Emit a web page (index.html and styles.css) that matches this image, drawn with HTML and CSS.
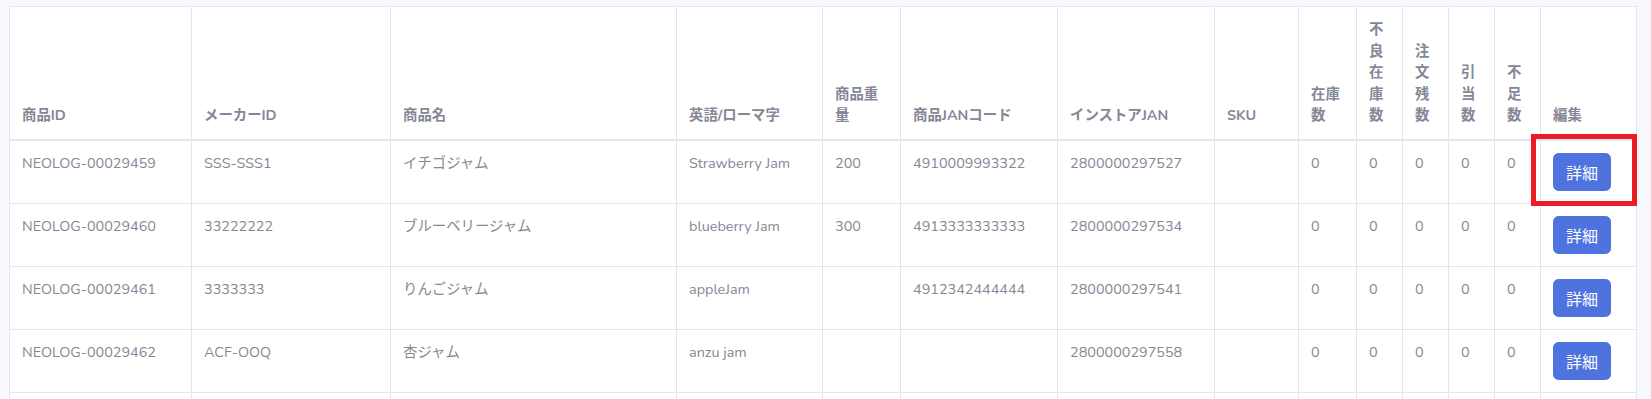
FILE: index.html
```html
<!DOCTYPE html>
<html lang="ja">
<head>
<meta charset="utf-8">
<title>商品一覧</title>
<link rel="stylesheet" href="styles.css">
</head>
<body>
<div class="wrap">
  <table class="grid">
    <colgroup>
      <col class="w1"><col class="w2"><col class="w3"><col class="w4"><col class="w5"><col class="w6"><col class="w7"><col class="w8"><col class="w9"><col class="w10"><col class="w11"><col class="w12"><col class="w13"><col class="w14">
    </colgroup>
    <thead>
      <tr>
        <th>商品ID</th>
        <th>メーカーID</th>
        <th>商品名</th>
        <th>英語/ローマ字</th>
        <th>商品重<br>量</th>
        <th>商品JANコード</th>
        <th>インストアJAN</th>
        <th>SKU</th>
        <th>在庫<br>数</th>
        <th>不<br>良<br>在<br>庫<br>数</th>
        <th>注<br>文<br>残<br>数</th>
        <th>引<br>当<br>数</th>
        <th>不<br>足<br>数</th>
        <th>編集</th>
      </tr>
    </thead>
    <tbody>
      <tr>
        <td>NEOLOG-00029459</td><td>SSS-SSS1</td><td>イチゴジャム</td><td>Strawberry Jam</td><td>200</td><td>4910009993322</td><td>2800000297527</td><td></td><td>0</td><td>0</td><td>0</td><td>0</td><td>0</td>
        <td class="edit"><button class="btn">詳細</button><span class="mark"></span></td>
      </tr>
      <tr>
        <td>NEOLOG-00029460</td><td>33222222</td><td>ブルーベリージャム</td><td>blueberry Jam</td><td>300</td><td>4913333333333</td><td>2800000297534</td><td></td><td>0</td><td>0</td><td>0</td><td>0</td><td>0</td>
        <td class="edit"><button class="btn">詳細</button></td>
      </tr>
      <tr>
        <td>NEOLOG-00029461</td><td>3333333</td><td>りんごジャム</td><td>appleJam</td><td></td><td>4912342444444</td><td>2800000297541</td><td></td><td>0</td><td>0</td><td>0</td><td>0</td><td>0</td>
        <td class="edit"><button class="btn">詳細</button></td>
      </tr>
      <tr>
        <td>NEOLOG-00029462</td><td>ACF-OOQ</td><td>杏ジャム</td><td>anzu jam</td><td></td><td></td><td>2800000297558</td><td></td><td>0</td><td>0</td><td>0</td><td>0</td><td>0</td>
        <td class="edit"><button class="btn">詳細</button></td>
      </tr>
      <tr class="tail">
        <td></td><td></td><td></td><td></td><td></td><td></td><td></td><td></td><td></td><td></td><td></td><td></td><td></td><td></td>
      </tr>
    </tbody>
  </table>
</div>
</body>
</html>
```

FILE: styles.css
```css
html, body {
  margin: 0;
  padding: 0;
  background: #f8f9fc;
  overflow: hidden;
}

body {
  font-family: "Nunito", "Lato", "Noto Sans CJK JP", sans-serif;
  font-size: 14.4px;
  line-height: 21.6px;
  color: #858796;
}

.wrap {
  padding: 6px 0 0 9px;
}

.grid {
  border-collapse: collapse;
  table-layout: fixed;
  width: 1627px;
  background: #fff;
  border: 1px solid #e3e6f0;
}

.w1 { width: 182px; }
.w2 { width: 199px; }
.w3 { width: 286px; }
.w4 { width: 146px; }
.w5 { width: 78px; }
.w6 { width: 157px; }
.w7 { width: 157px; }
.w8 { width: 84px; }
.w9 { width: 58px; }
.w10 { width: 46px; }
.w11 { width: 46px; }
.w12 { width: 46px; }
.w13 { width: 46px; }
.w14 { width: 96px; }

.grid th,
.grid td {
  border: 1px solid #e3e6f0;
  padding: 12px;
  text-align: left;
  overflow: visible;
  white-space: nowrap;
}

.grid th {
  vertical-align: bottom;
  font-weight: 700;
  border-bottom-width: 2px;
}

.grid td {
  vertical-align: top;
}

.tail td {
  height: 40px;
}

.edit {
  position: relative;
}

.btn {
  display: block;
  font-family: "Noto Sans CJK JP", sans-serif;
  font-size: 16px;
  line-height: 24px;
  padding: 6px 12px;
  color: #fff;
  background: #4e73df;
  border: 1px solid #4e73df;
  border-radius: 5.6px;
  cursor: pointer;
}

.mark {
  position: absolute;
  left: -10px;
  top: -7px;
  width: 96px;
  height: 62px;
  border: 5px solid #ed1c24;
  pointer-events: none;
}
```
